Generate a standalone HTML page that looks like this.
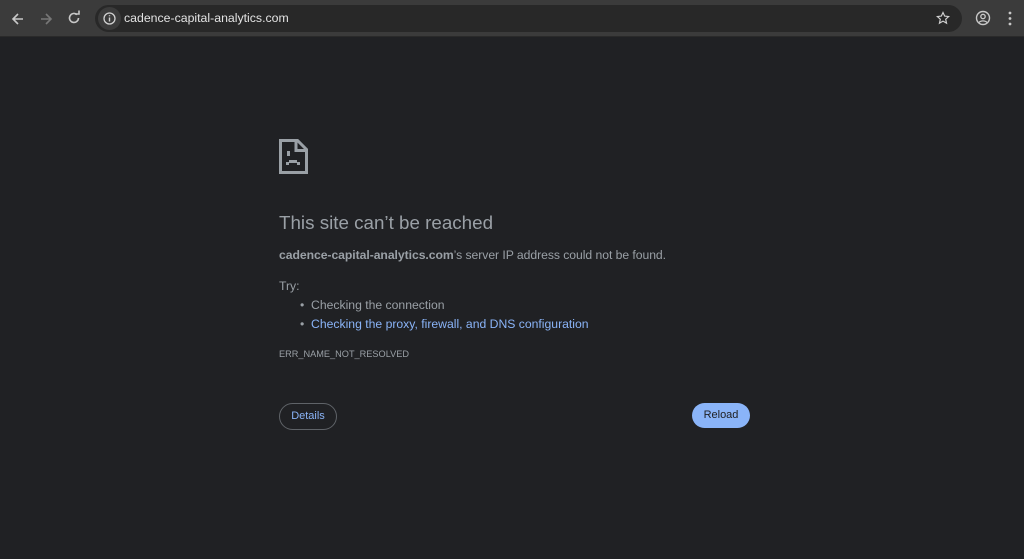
<!DOCTYPE html>
<html><head><meta charset="utf-8"><style>
*{margin:0;padding:0;box-sizing:border-box}
body{width:1024px;height:559px;background:#202124;font-family:"Liberation Sans",Arial,sans-serif;overflow:hidden;position:relative;color:#9aa0a6}
.bar{position:absolute;left:0;top:0;width:1024px;height:37px;background:#3b3b3b;border-bottom:1px solid #2a2a2a}
.omni{position:absolute;left:95px;top:5px;width:867px;height:27px;border-radius:14px;background:#282828}
.info{position:absolute;left:98px;top:7px;width:23px;height:23px;border-radius:50%;background:#3b3b3b}
.url{position:absolute;left:124px;top:11px;font-size:12.3px;color:#e3e3e3}
.a{position:absolute}
.t{position:absolute;left:279px;white-space:nowrap}
</style></head><body>
<div class="bar"></div>
<svg class="a" style="left:10px;top:11px" width="16" height="16" viewBox="0 0 16 16"><path d="M13 8H3M8 3L3 8l5 5" stroke="#c8c8c8" stroke-width="1.6" fill="none"/></svg>
<svg class="a" style="left:38px;top:11px" width="16" height="16" viewBox="0 0 16 16"><path d="M3 8h10M8 3l5 5-5 5" stroke="#777" stroke-width="1.6" fill="none"/></svg>
<svg class="a" style="left:66px;top:10px" width="16" height="16" viewBox="0 0 16 16"><path d="M12.5 8A4.5 4.5 0 1 1 11 4.6" stroke="#c8c8c8" stroke-width="1.6" fill="none"/><path d="M9 4h4V0.5" stroke="#c8c8c8" stroke-width="1.6" fill="none"/></svg>
<div class="omni"></div><div class="info"></div>
<svg class="a" style="left:103px;top:12px" width="13" height="13" viewBox="0 0 13 13"><circle cx="6.5" cy="6.5" r="5.5" stroke="#d0d0d0" stroke-width="1.3" fill="none"/><path d="M6.5 5.5v4M6.5 3.3v1" stroke="#d0d0d0" stroke-width="1.4"/></svg>
<div class="url">cadence-capital-analytics.com</div>
<svg class="a" style="left:936px;top:11px" width="14" height="14" viewBox="0 0 24 24"><path d="M12 2.5l2.9 6.3 6.9.7-5.2 4.6 1.5 6.8L12 17.4l-6.1 3.5 1.5-6.8-5.2-4.6 6.9-.7z" stroke="#d0d0d0" stroke-width="2" fill="none"/></svg>
<svg class="a" style="left:975px;top:10px" width="16" height="16" viewBox="0 0 16 16"><circle cx="8" cy="8" r="6.5" stroke="#c8c8c8" stroke-width="1.4" fill="none"/><circle cx="8" cy="6.5" r="2.2" stroke="#c8c8c8" stroke-width="1.3" fill="none"/><path d="M4 12.5c2-2.2 6-2.2 8 0" stroke="#c8c8c8" stroke-width="1.3" fill="none"/></svg>
<svg class="a" style="left:1008px;top:11px" width="4" height="15" viewBox="0 0 4 15"><circle cx="2" cy="2" r="1.4" fill="#c8c8c8"/><circle cx="2" cy="7.5" r="1.4" fill="#c8c8c8"/><circle cx="2" cy="13" r="1.4" fill="#c8c8c8"/></svg>
<svg class="a" style="left:279px;top:139px" width="29" height="35" viewBox="0 0 29 35"><path d="M1.5 1.5h17l9 9v23h-26z" stroke="#9aa0a6" stroke-width="3" fill="none"/><path d="M17 1.5v10h10" stroke="#9aa0a6" stroke-width="3" fill="none"/><rect x="8" y="12" width="3" height="5" fill="#9aa0a6"/><rect x="7" y="23" width="3" height="3" fill="#9aa0a6"/><rect x="10" y="21" width="8" height="3" fill="#9aa0a6"/><rect x="18" y="23" width="3" height="3" fill="#9aa0a6"/></svg>
<div class="t" style="top:212px;font-size:18.8px;color:#9aa0a6">This site can’t be reached</div>
<div class="t" style="top:248px;font-size:12.2px;letter-spacing:-0.05px"><b style="color:#9aa0a6">cadence-capital-analytics.com</b>’s server IP address could not be found.</div>
<div class="t" style="top:279px;font-size:12.2px">Try:</div>
<div class="t" style="left:300px;top:298px;font-size:12.2px">•&nbsp; Checking the connection</div>
<div class="t" style="left:300px;top:317px;font-size:12.2px">•&nbsp; <span style="color:#8ab4f8">Checking the proxy, firewall, and DNS configuration</span></div>
<div class="t" style="top:349px;font-size:9.2px">ERR_NAME_NOT_RESOLVED</div>
<div class="a" style="left:279px;top:403px;width:58px;height:27px;border:1px solid #5f6368;border-radius:14px;color:#8ab4f8;font-size:11px;text-align:center;line-height:25px">Details</div>
<div class="a" style="left:692px;top:403px;width:58px;height:25px;background:#8ab4f8;border-radius:13px;color:#202124;font-size:11px;text-align:center;line-height:25px">Reload</div>
</body></html>
